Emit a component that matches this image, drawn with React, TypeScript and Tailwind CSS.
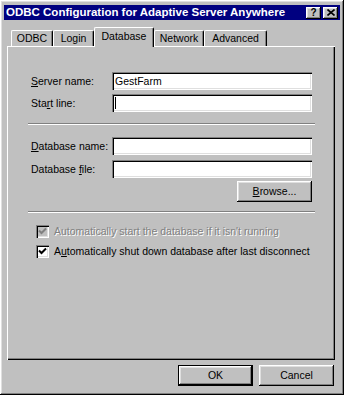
const raised =
  'shadow-[inset_-1px_-1px_#000,inset_1px_1px_#fff,inset_-2px_-2px_#808080,inset_2px_2px_#dfdfdf]';
const sunken =
  'shadow-[inset_1px_1px_#808080,inset_2px_2px_#000,inset_-1px_-1px_#fff,inset_-2px_-2px_#dfdfdf]';

function Field({ label, value, cursor }: { label: React.ReactNode; value?: string; cursor?: boolean }) {
  return (
    <div className="flex items-center h-[18px]">
      <div className="w-[81px] shrink-0 whitespace-nowrap">{label}</div>
      <div className={`flex-1 h-[18px] bg-white ${sunken} flex items-center pl-[3px]`}>
        {value && <span>{value}</span>}
        {cursor && <span className="block w-px h-[12px] bg-black" />}
      </div>
    </div>
  );
}

function Separator() {
  return <div className="-mx-[3px] h-[2px] border-t border-[#808080] border-b border-b-white" />;
}

function Check({ disabled }: { disabled?: boolean }) {
  return (
    <div className={`w-[13px] h-[13px] shrink-0 ${sunken} ${disabled ? 'bg-[#c0c0c0]' : 'bg-white'} relative`}>
      <svg width="13" height="13" viewBox="0 0 13 13" className="absolute left-0 top-0">
        <path
          d="M3 5.5 L5.5 8 L10 3.5"
          fill="none"
          stroke={disabled ? '#808080' : '#000'}
          strokeWidth="2"
        />
      </svg>
    </div>
  );
}

const tabs = [
  { label: 'ODBC', w: 'w-[42px]' },
  { label: 'Login', w: 'w-[41px]' },
  { label: 'Database', w: 'w-[60px]', active: true },
  { label: 'Network', w: 'w-[50px]' },
  { label: 'Advanced', w: 'w-[63px]' },
];

export default function App() {
  return (
    <div
      className={`w-[344px] h-[395px] bg-[#c0c0c0] ${raised} p-[4px] pt-[5px] flex flex-col text-[10.5px] text-black leading-none`}
      style={{ fontFamily: '"Liberation Sans", Arial, sans-serif' }}
    >
      {/* title bar */}
      <div className="h-[15px] bg-[#000080] flex items-center justify-between pl-[2px] pr-[2px]">
        <span className="text-white font-bold text-[11.5px] whitespace-nowrap">
          ODBC Configuration for Adaptive Server Anywhere
        </span>
        <div className="flex gap-[2px]">
          <div className={`w-[15px] h-[12px] bg-[#c0c0c0] ${raised} flex items-center justify-center font-bold text-[10px]`}>
            ?
          </div>
          <div className={`w-[15px] h-[12px] bg-[#c0c0c0] ${raised} flex items-center justify-center`}>
            <svg width="8" height="7" viewBox="0 0 8 7">
              <path d="M0.5 0.5 L7.5 6.5 M7.5 0.5 L0.5 6.5" stroke="#000" strokeWidth="1.6" />
            </svg>
          </div>
        </div>
      </div>

      {/* tabs */}
      <div className="mt-[7px] pl-[3px] pr-[5px] flex flex-col">
        <div className="flex items-end pl-[4px] h-[19px] relative z-10">
          {tabs.map((t) => (
            <div
              key={t.label}
              className={`${t.w} ${
                t.active ? 'h-[20px] -mb-[1px] pb-[3px] bg-[#c0c0c0]' : 'h-[16px]'
              } border-l border-t border-white border-r border-r-black rounded-t-[2px] shadow-[inset_-1px_0_#808080] flex items-center justify-center`}
            >
              {t.label}
            </div>
          ))}
        </div>
        <div className="h-[314px] border-l border-t border-white shadow-[inset_-1px_-1px_#000,inset_-2px_-2px_#808080] pt-[25px] px-[23px] flex flex-col">
          <div className="flex flex-col gap-[4px]">
            <Field
              label={
                <>
                  <u>S</u>erver name:
                </>
              }
              value="GestFarm"
            />
            <Field
              label={
                <>
                  Sta<u>r</u>t line:
                </>
              }
              cursor
            />
          </div>
          <div className="mt-[11px]">
            <Separator />
          </div>
          <div className="mt-[12px] flex flex-col gap-[5px]">
            <Field
              label={
                <>
                  <u>D</u>atabase name:
                </>
              }
            />
            <Field
              label={
                <>
                  Database <u>f</u>ile:
                </>
              }
            />
          </div>
          <div className="mt-[3px] flex justify-end">
            <div className={`w-[75px] h-[21px] ${raised} flex items-center justify-center`}>
              <span>
                <u>B</u>rowse...
              </span>
            </div>
          </div>
          <div className="mt-[9px]">
            <Separator />
          </div>
          <div className="mt-[12px] pl-[5px] flex flex-col gap-[7px]">
            <div className="flex items-center gap-[5px]">
              <Check disabled />
              <span className="text-[#808080] [text-shadow:1px_1px_#fff]">
                Automatically start the database if it isn't running
              </span>
            </div>
            <div className="flex items-center gap-[5px]">
              <Check />
              <span>
                A<u>u</u>tomatically shut down database after last disconnect
              </span>
            </div>
          </div>
        </div>
      </div>

      {/* buttons */}
      <div className="mt-[5px] pr-[6px] flex justify-end gap-[6px]">
        <div className="w-[75px] h-[21px] border border-black">
          <div className={`w-full h-full ${raised} flex items-center justify-center`}>OK</div>
        </div>
        <div className={`w-[75px] h-[21px] ${raised} flex items-center justify-center`}>Cancel</div>
      </div>
    </div>
  );
}
